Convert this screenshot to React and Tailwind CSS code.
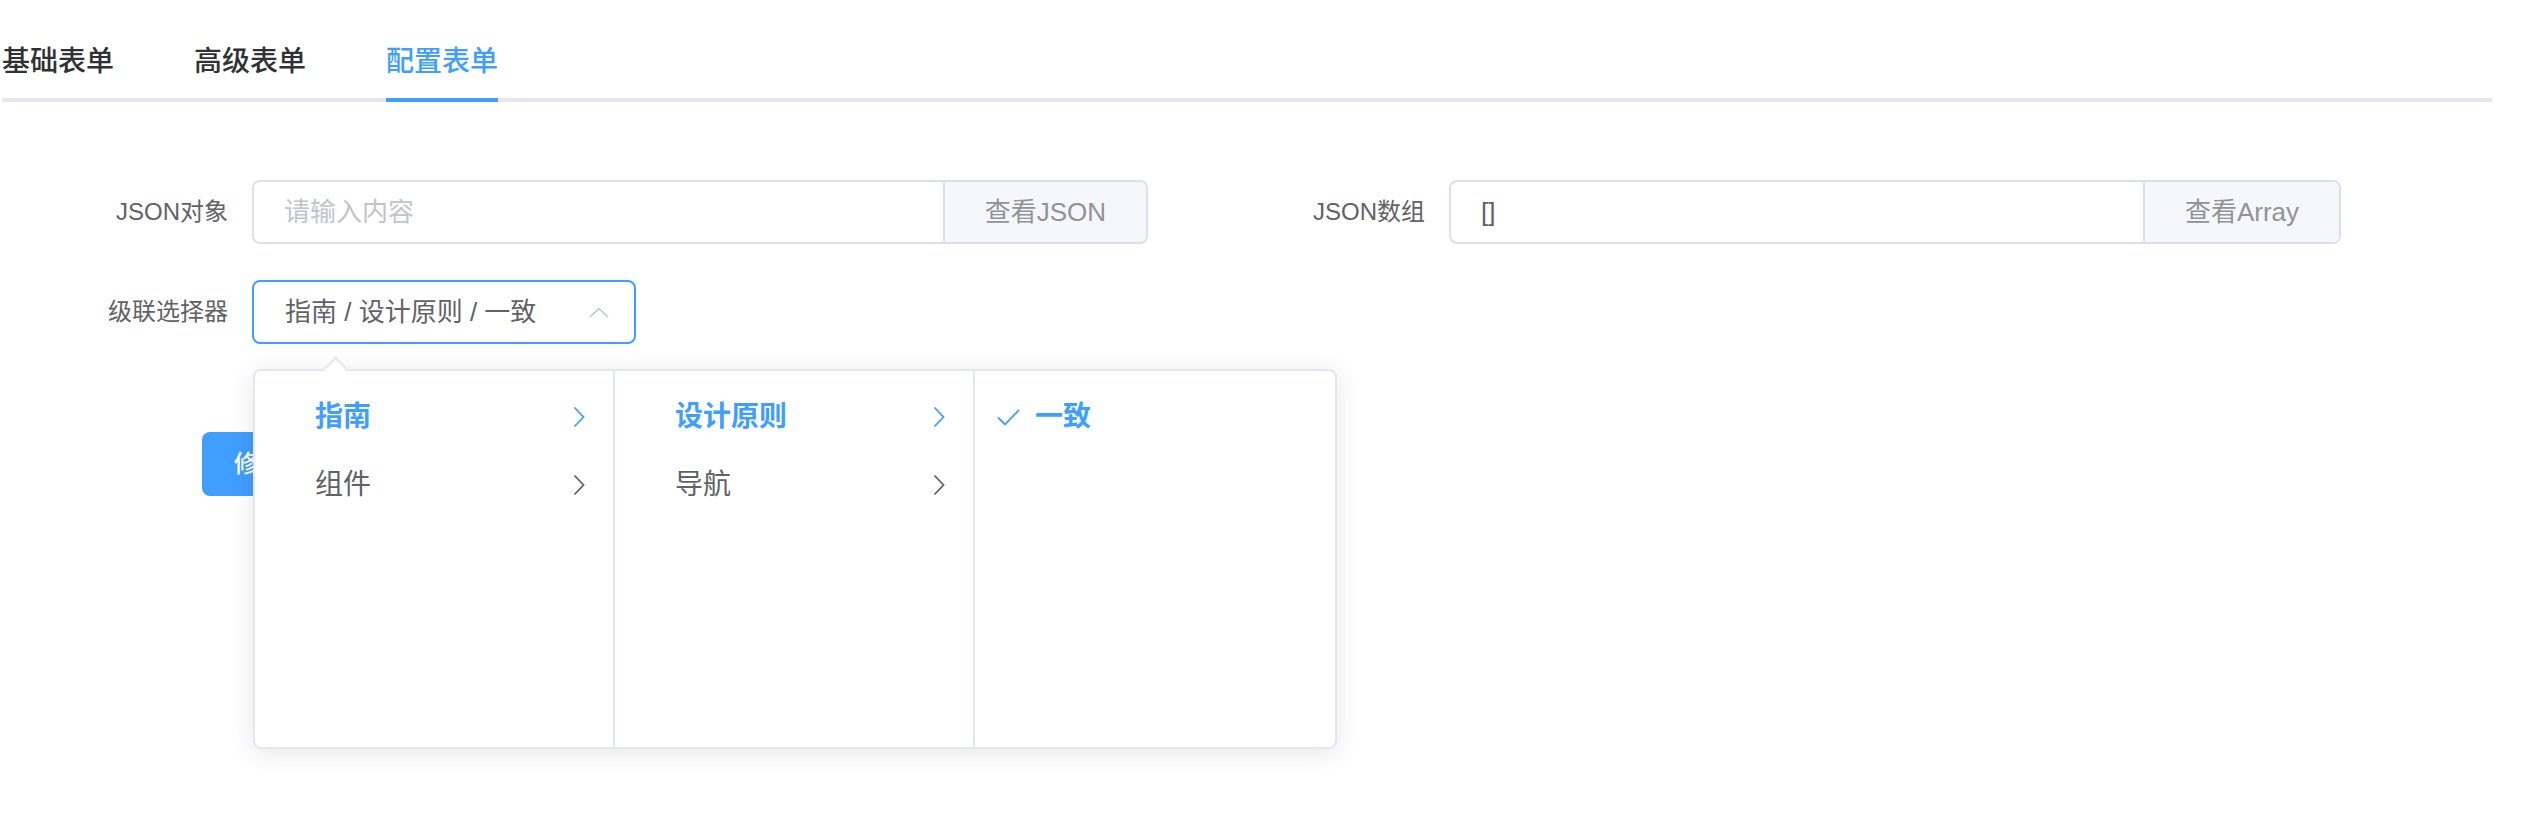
import { useState } from "react";

const TABS = ["基础表单", "高级表单", "配置表单"];

const OPTIONS = [
  {
    label: "指南",
    children: [
      { label: "设计原则", children: [{ label: "一致" }] },
      { label: "导航", children: [] },
    ],
  },
  { label: "组件", children: [] },
];

function Chevron({ color }) {
  return (
    <svg width="12" height="22" viewBox="0 0 12 22" fill="none">
      <path d="M1.5 1.5 L10.5 11 L1.5 20.5" stroke={color} strokeWidth="1.8" />
    </svg>
  );
}

function Label({ children }) {
  return (
    <div className="w-[200px] shrink-0 pr-[24px] text-right text-[24px] text-[#606266]">
      {children}
    </div>
  );
}

function AppendInput({ width, value, placeholder, button }) {
  return (
    <div
      className={`flex h-[64px] overflow-hidden rounded-[8px] border-2 border-[#DCDFE6] ${width}`}
    >
      <input
        readOnly
        value={value}
        placeholder={placeholder}
        className="min-w-0 flex-1 bg-white px-[30px] text-[26px] text-[#606266] outline-none placeholder:text-[#C0C4CC]"
      />
      <div className="flex items-center border-l-2 border-[#DCDFE6] bg-[#F5F7FA] px-[40px] text-[26px] text-[#909399]">
        {button}
      </div>
    </div>
  );
}

function CascaderMenu({ items, active, last, leaf }) {
  return (
    <div
      className={`h-full w-[360px] shrink-0 py-[12px] ${
        last ? "" : "border-r-2 border-[#E4E7ED]"
      }`}
    >
      {items.map((it, i) => {
        const on = i === active;
        if (leaf) {
          return (
            <div key={it.label} className="flex h-[68px] items-center pl-[22px]">
              <svg width="23" height="17" viewBox="0 0 23 17" fill="none">
                <path d="M1 8.5 L8 15.5 L22 1" stroke="#409EFF" strokeWidth="1.8" />
              </svg>
              <span className="ml-[15px] text-[28px] font-semibold text-[#409EFF]">
                {it.label}
              </span>
            </div>
          );
        }
        return (
          <div key={it.label} className="flex h-[68px] items-center pl-[60px] pr-[28px]">
            <span
              className={`flex-1 text-[28px] ${
                on ? "font-semibold text-[#409EFF]" : "text-[#606266]"
              }`}
            >
              {it.label}
            </span>
            <Chevron color={on ? "#409EFF" : "#606266"} />
          </div>
        );
      })}
    </div>
  );
}

export default function App() {
  const [tab] = useState(2);
  const level2 = OPTIONS[0].children;
  const level3 = level2[0].children;

  return (
    <div className="h-[824px] w-full bg-white font-['Helvetica_Neue','Liberation_Sans','Noto_Sans_CJK_SC',sans-serif]">
      {/* tabs */}
      <div className="ml-[2px] mt-[22px] flex h-[80px] w-[2490px] shadow-[inset_0_-4px_0_#E4E7ED]">
        {TABS.map((t, i) => (
          <div
            key={t}
            className={`flex h-full ${i === 0 ? "pl-0" : "pl-[40px]"} ${
              i === TABS.length - 1 ? "pr-0" : "pr-[40px]"
            }`}
          >
            <div
              className={`flex h-full items-center text-[28px] font-medium ${
                i === tab
                  ? "text-[#409EFF] shadow-[inset_0_-4px_0_#409EFF]"
                  : "text-[#303133]"
              }`}
            >
              {t}
            </div>
          </div>
        ))}
      </div>

      {/* form */}
      <div className="mt-[78px] flex items-center pl-[52px]">
        <Label>JSON对象</Label>
        <AppendInput width="w-[896px]" value="" placeholder="请输入内容" button="查看JSON" />
        <div className="ml-[101px] flex items-center">
          <Label>JSON数组</Label>
          <AppendInput width="w-[892px]" value="[]" placeholder="" button="查看Array" />
        </div>
      </div>

      <div className="mt-[36px] flex items-center pl-[52px]">
        <Label>级联选择器</Label>
        <div className="relative z-10">
          <div className="flex h-[64px] w-[384px] items-center rounded-[8px] border-2 border-[#409EFF] pl-[31px] pr-[25px]">
            <span className="flex-1 text-[26px] text-[#606266]">指南 / 设计原则 / 一致</span>
            <svg width="20" height="11" viewBox="0 0 20 11" fill="none">
              <path d="M1 10 L10 1.5 L19 10" stroke="#C0C4CC" strokeWidth="1.6" />
            </svg>
          </div>

          {/* dropdown panel */}
          <div className="absolute left-[1px] top-[89px] flex h-[380px] w-[1084px] rounded-[8px] border-2 border-[#E4E7ED] bg-white shadow-[0_4px_24px_rgba(0,0,0,0.1)]">
            <div className="absolute left-[72px] top-[-11px] h-[17px] w-[17px] rotate-45 border-l-2 border-t-2 border-[#E4E7ED] bg-white" />
            <CascaderMenu items={OPTIONS} active={0} />
            <CascaderMenu items={level2} active={0} />
            <CascaderMenu items={level3} active={0} last leaf />
          </div>
        </div>
      </div>

      <div className="ml-[202px] mt-[88px] flex">
        <button className="h-[64px] rounded-[8px] bg-[#409EFF] px-[32px] text-[24px] font-medium text-white">
          修改配置
        </button>
      </div>
    </div>
  );
}
